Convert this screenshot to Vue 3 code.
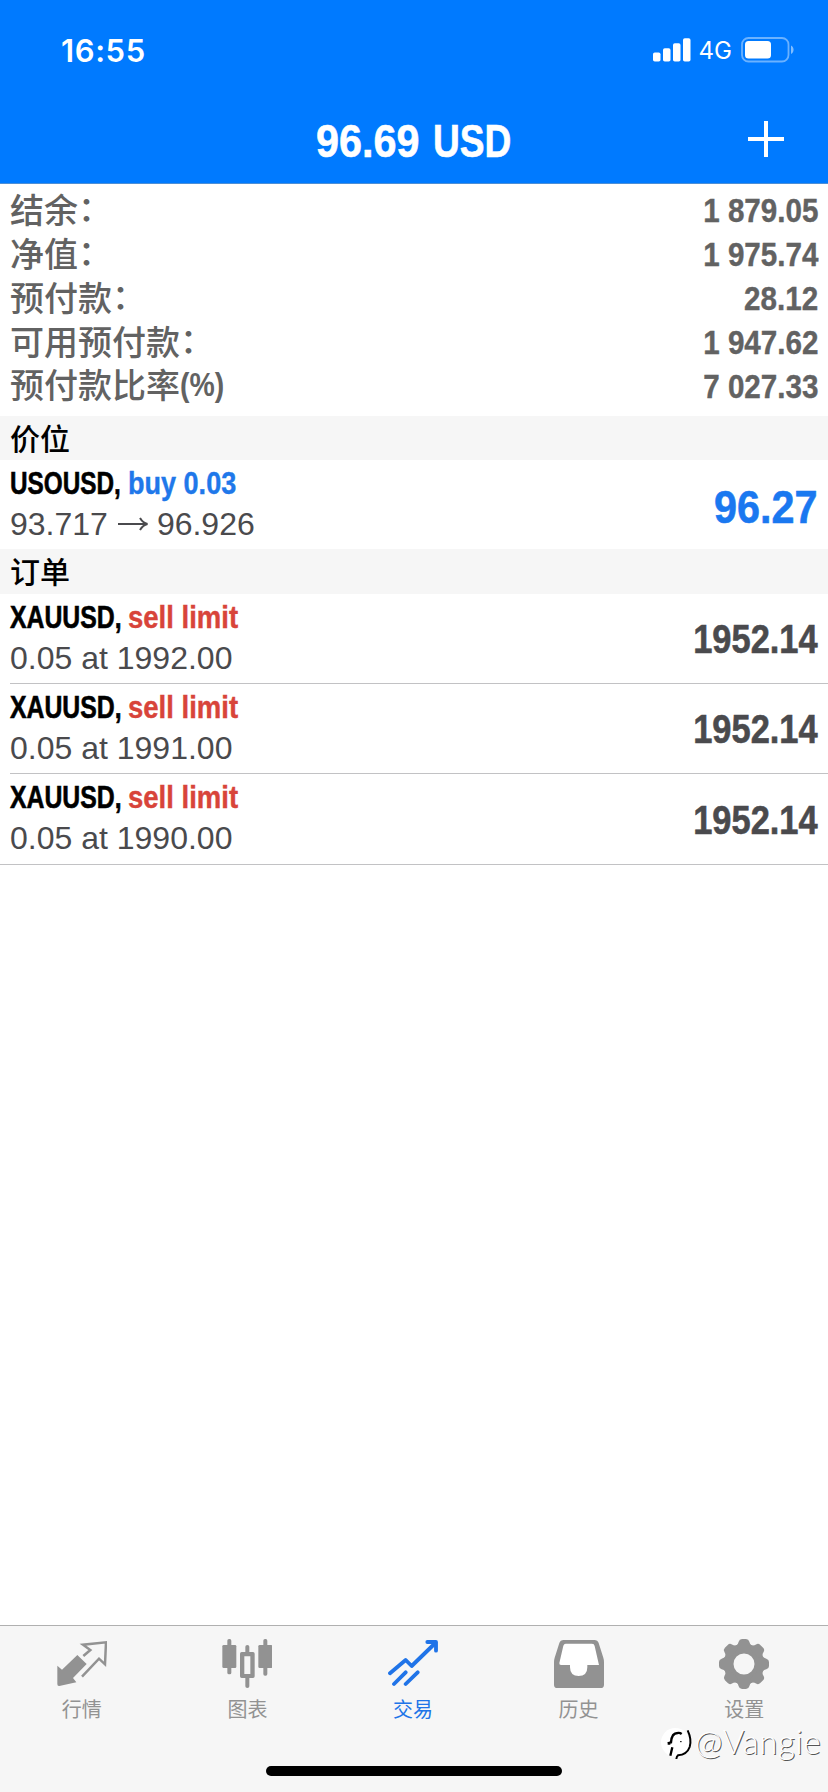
<script setup>
const summary = [
  { label: '结余', colon: true, value: '1 879.05' },
  { label: '净值', colon: true, value: '1 975.74' },
  { label: '预付款', colon: true, value: '28.12' },
  { label: '可用预付款', colon: true, value: '1 947.62' },
  { label: '预付款比率', suffix: '(%)', value: '7 027.33' },
]
const orders = [
  { id: 1, price: '1992.00' },
  { id: 2, price: '1991.00' },
  { id: 3, price: '1990.00' },
]
const teeth = [0, 45, 90, 135, 180, 225, 270, 315]
</script>

<template>
  <div class="screen">
    <header class="header">
      <div class="status">
        <span class="time">16:55</span>
        <div class="status-right">
          <svg class="signal" width="38" height="24" viewBox="0 0 38 24" fill="#fff">
            <rect x="0" y="14.5" width="7.5" height="9" rx="1.8" />
            <rect x="10" y="10.2" width="7.5" height="13.3" rx="1.8" />
            <rect x="20" y="5.2" width="7.5" height="18.3" rx="1.8" />
            <rect x="30" y="0.2" width="7.5" height="23.3" rx="1.8" />
          </svg>
          <span class="network">4G</span>
          <svg class="battery" width="54" height="26" viewBox="0 0 54 26">
            <rect x="1" y="1" width="46.5" height="23.5" rx="6.5" fill="none" stroke="#fff" stroke-opacity=".42" stroke-width="1.8" />
            <rect x="4" y="4" width="26" height="17.5" rx="3.5" fill="#fff" />
            <path d="M50 8.500c3.400 1.200 3.400 7.300 0 8.500z" fill="#fff" fill-opacity=".5" />
          </svg>
        </div>
      </div>
      <div class="nav">
        <h1 class="title"><span class="sum">96.69</span><span class="currency">USD</span></h1>
        <svg class="plus" width="36" height="36" viewBox="0 0 36 36">
          <path d="M18 0v36M0 18h36" stroke="#fff" stroke-width="4" />
        </svg>
      </div>
    </header>

    <section class="summary">
      <div v-for="row in summary" :key="row.label" class="summary-row">
        <span class="label">{{ row.label }}<span v-if="row.colon" class="colon">：</span><span v-if="row.suffix" class="suffix">{{ row.suffix }}</span></span>
        <span class="amount">{{ row.value }}</span>
      </div>
    </section>

    <h2 class="section">价位</h2>
    <div class="row position">
      <div class="info">
        <div class="line1"><span class="symbol">USOUSD,</span><span class="side buy">buy 0.03</span></div>
        <div class="line2">
          <span>93.717</span>
          <svg class="arrow" width="32" height="16" viewBox="0 0 32 16" fill="none" stroke="#4a4a4d" stroke-width="2">
            <path d="M1 8h29M23 2q3 5 7.500 6q-4.500 1-7.500 6" />
          </svg>
          <span>96.926</span>
        </div>
      </div>
      <span class="profit">96.27</span>
    </div>

    <h2 class="section tall">订单</h2>
    <div class="orders">
      <div v-for="order in orders" :key="order.id" class="row order">
        <div class="info">
          <div class="line1"><span class="symbol xau">XAUUSD,</span><span class="side sell">sell limit</span></div>
          <div class="line2">0.05 at {{ order.price }}</div>
        </div>
        <span class="price">1952.14</span>
      </div>
    </div>

    <footer class="tabbar">
      <nav class="tabs">
        <div class="tab">
          <svg width="50" height="50" viewBox="170 87 150 150">
            <path d="M231 135l28 27-41 42 10 13-51 11q-6 1-6-6v-55l14 12z" fill="#929292" />
            <path d="M249 138l21-18-22-16 69-7-3 66-18-17-51 54" fill="none" stroke="#929292" stroke-width="7.500" />
          </svg>
          <span>行情</span>
        </div>
        <div class="tab">
          <svg width="50" height="50" viewBox="668 87 150 150" fill="#929292">
            <rect x="684" y="87" width="12" height="106" rx="5" />
            <rect x="669" y="105" width="42" height="69" rx="4" />
            <rect x="792" y="87" width="12" height="110" rx="5" />
            <rect x="777" y="105" width="42" height="69" rx="4" />
            <path d="M738 126v-16q0-5 6-5t6 5v16h11q5 0 5 5v68q0 5-5 5h-11v25q0 5-6 5t-6-5v-25h-11q-5 0-5-5v-68q0-5 5-5zM735 139v53h18v-53z" fill-rule="evenodd" />
          </svg>
          <span>图表</span>
        </div>
        <div class="tab active">
          <svg width="50" height="50" viewBox="264 87 150 150" fill="none" stroke="#2074e8" stroke-width="11.500" stroke-linecap="round" stroke-linejoin="round">
            <path d="M270 190l47-40 18 18 68-66M282 222l35-35M317 222l36-35" />
            <path d="M382 96h26v26" />
            <path d="M392 96h16v16z" fill="#2074e8" stroke="none" />
          </svg>
          <span>交易</span>
        </div>
        <div class="tab">
          <svg width="50" height="50" viewBox="75 87 150 150" fill="#929292">
            <path fill="#fff" d="M110 101q-5 0-7 6l-12 52q-1 6 5 6h27v7q0 26 26 26t26-26v-7h35l-13-57q-1-7-8-7z" />
            <path fill-rule="evenodd" d="M104 90h92q10 0 13 9l14 44q2 6 2 14v67q0 10-10 10H85q-10 0-10-10v-67q0-8 2-14l14-44q3-9 13-9zM110 101q-5 0-7 6l-12 52q-1 6 5 6h27v7q0 26 26 26t26-26v-7h35l-13-57q-1-7-8-7z" />
          </svg>
          <span>历史</span>
        </div>
        <div class="tab">
          <svg width="50" height="50" viewBox="-75 -75 150 150" fill="#929292">
            <circle r="46" fill="none" stroke="#929292" stroke-width="29" />
            <path v-for="a in teeth" :key="a" :transform="`rotate(${a})`" d="M-24-55Q-17-60-16-67Q-14-75-6-75H6Q14-75 16-67Q17-60 24-55L18-44H-18Z" />
          </svg>
          <span>设置</span>
        </div>
      </nav>
      <div class="home-indicator"></div>
      <div class="watermark">
        <svg width="34" height="34" viewBox="0 0 102 102" fill="none" stroke="#000">
          <circle cx="43" cy="46" r="43" fill="#fff" stroke="none" />
          <path d="M28 86l6-25M20 49l10-3q2-28 20-28 7-1 12 3M20 50h8" stroke-width="7" />
          <path d="M80 10q13 28 6 50-8 23-35 25-4 3-5 11" stroke-width="6" />
          <path d="M57 44h5" stroke-width="3" />
        </svg>
        <span>@Vangie</span>
      </div>
    </footer>
  </div>
</template>

<style>
body {
  margin: 0;
  background: #fff;
}
</style>

<style scoped>
.screen {
  width: 828px;
  height: 1792px;
  display: flex;
  flex-direction: column;
  overflow: hidden;
  background: #fff;
  font-family: "Liberation Sans", "Noto Sans CJK SC", sans-serif;
}
.header {
  height: 184px;
  flex: none;
  box-sizing: border-box;
  background: #007aff;
  border-bottom: 1px solid #4d8fd6;
  color: #fff;
}
.status {
  height: 98px;
  box-sizing: border-box;
  display: flex;
  justify-content: space-between;
  padding: 1px 33px 0 61px;
  align-items: center;
}
.time {
  font: 600 31px/40px Inter, sans-serif;
  letter-spacing: 0.6px;
  padding-top: 2px;
}
.status-right {
  display: flex;
  align-items: center;
}
.network {
  font: 400 24px/26px Inter, sans-serif;
  margin: 3px 9px 0 8px;
}
.nav {
  height: 85px;
  display: grid;
  grid-template-columns: 1fr auto 1fr;
  align-items: center;
}
.title {
  grid-column: 2;
  display: flex;
  justify-content: space-between;
  margin: 0;
  width: 196px;
  font-size: 47px;
  line-height: 50px;
  white-space: nowrap;
  -webkit-text-stroke: 0.6px #fff;
}
.sum {
  width: 104px;
  transform: scaleX(0.88);
  transform-origin: left;
}
.currency {
  width: 79px;
  transform: scaleX(0.79);
  transform-origin: left;
}
.plus {
  justify-self: end;
  margin: 0 44px 4px 0;
}
.summary {
  height: 232px;
  flex: none;
  box-sizing: border-box;
  padding: 4px 10px 0;
  color: #626262;
}
.summary-row {
  height: 44px;
  display: flex;
  justify-content: space-between;
  align-items: center;
}
.label {
  display: flex;
  font: 500 34px/42px "Noto Sans CJK SC", sans-serif;
  padding-bottom: 2px;
}
.colon {
  font-family: "Noto Sans CJK TC", sans-serif;
  font-feature-settings: "halt";
}
.suffix {
  font: 700 33px/44px "Liberation Sans", sans-serif;
  transform: scaleX(0.86);
  transform-origin: left;
}
.amount,
.profit,
.price {
  font-weight: 700;
  transform-origin: right;
  white-space: nowrap;
}
.amount {
  font-size: 34px;
  line-height: 44px;
  transform: scaleX(0.87);
  -webkit-text-stroke: 0.4px #626262;
}
.section {
  height: 44px;
  flex: none;
  box-sizing: border-box;
  margin: 0;
  padding-left: 10px;
  background: #f6f6f6;
  color: #000;
  font: 500 30px/42px "Noto Sans CJK SC", sans-serif;
}
.section.tall {
  height: 45px;
}
.row {
  height: 90px;
  flex: none;
  box-sizing: border-box;
  display: flex;
  justify-content: space-between;
  align-items: center;
  margin-left: 10px;
  padding-right: 10px;
}
.position {
  height: 89px;
}
.order {
  border-bottom: 1px solid #c2c2c4;
}
.order:last-child {
  height: 91px;
  margin-left: 0;
  padding-left: 10px;
}
.info {
  align-self: flex-start;
  padding-top: 2px;
}
.line1 {
  display: flex;
  height: 43px;
  font-size: 32px;
  font-weight: 700;
  line-height: 43px;
  white-space: nowrap;
}
.symbol {
  width: 118px;
  color: #000;
  transform: scaleX(0.76);
  transform-origin: left;
  -webkit-text-stroke: 0.6px #000;
}
.symbol.xau {
  transform: scaleX(0.775);
}
.side {
  transform-origin: left;
}
.buy {
  color: #1f78ea;
  transform: scaleX(0.845);
  -webkit-text-stroke: 0.4px #1f78ea;
}
.sell {
  color: #d8443a;
  transform: scaleX(0.86);
  -webkit-text-stroke: 0.4px #d8443a;
}
.line2 {
  display: flex;
  align-items: center;
  height: 38px;
  color: #4a4a4d;
  font-size: 32px;
  line-height: 38px;
  white-space: pre;
}
.arrow {
  margin: 0 8px 0 9px;
}
.profit {
  color: #1a78f0;
  font-size: 47px;
  padding-top: 3px;
  transform: scaleX(0.88);
  -webkit-text-stroke: 0.6px #1a78f0;
}
.price {
  color: #4a4a4d;
  font-size: 40px;
  padding-top: 2px;
  transform: scaleX(0.86);
  -webkit-text-stroke: 0.6px #4a4a4d;
}
.tabbar {
  position: relative;
  margin-top: auto;
  height: 167px;
  box-sizing: border-box;
  border-top: 1px solid #b0b0b0;
  background: #f6f6f6;
}
.tabs {
  display: grid;
  grid-template-columns: repeat(5, 1fr);
  margin: 0 1px 0 -1px;
  padding-top: 13px;
}
.tab {
  display: flex;
  flex-direction: column;
  align-items: center;
  color: #929292;
  font: 400 20px/28px "Noto Sans CJK SC", sans-serif;
}
.tab span {
  margin-top: 6px;
}
.active {
  color: #2074e8;
}
.home-indicator {
  position: absolute;
  left: 266px;
  bottom: 16px;
  width: 296px;
  height: 10px;
  border-radius: 5px;
  background: #000;
}
.watermark {
  position: absolute;
  left: 661px;
  top: 101px;
  display: flex;
  color: #fff;
  font: 300 33px/29px Lato, sans-serif;
  letter-spacing: 0.6px;
  text-shadow: 1px 1px 0 #555;
  white-space: nowrap;
}
</style>
